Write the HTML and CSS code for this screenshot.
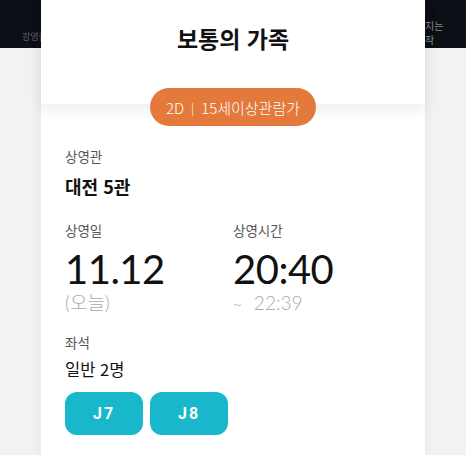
FILE: index.html
```html
<!DOCTYPE html>
<html lang="ko">
<head>
<meta charset="utf-8">
<link rel="stylesheet" href="styles.css">
</head>
<body>
<div class="topbar">
  <span class="bar-left">강영한</span>
  <span class="bar-right"><span class="bar-line">지는</span><span class="bar-line">작</span></span>
</div>
<div class="modal">
  <div class="modal-head">
    <h1 class="title">보통의 가족</h1>
  </div>
  <div class="modal-body">
    <div class="badge">2D <span class="sep">|</span> 15세이상관람가</div>
    <div class="field">
      <div class="label">상영관</div>
      <div class="hall">대전 5관</div>
    </div>
    <div class="cols">
      <div class="col">
        <div class="label">상영일</div>
        <div class="big">11.12</div>
        <div class="sub">(오늘)</div>
      </div>
      <div class="col">
        <div class="label">상영시간</div>
        <div class="big">20:40</div>
        <div class="sub"><span class="tilde">~</span> 22:39</div>
      </div>
    </div>
    <div class="field seats">
      <div class="label">좌석</div>
      <div class="people">일반 2명</div>
      <div class="seat-list">
        <span class="seat">J7</span>
        <span class="seat">J8</span>
      </div>
    </div>
  </div>
</div>
</body>
</html>
```
FILE: styles.css
```css
html, body {
  margin: 0;
  padding: 0;
}
body {
  width: 466px;
  height: 455px;
  overflow: hidden;
  background: #f2f2f2;
  font-family: "Noto Sans CJK KR", "Noto Sans", sans-serif;
  position: relative;
}
.topbar {
  height: 48px;
  background: #0c0f15;
  display: flex;
  justify-content: space-between;
  color: #666;
  font-size: 9px;
  line-height: 11px;
}
.bar-left {
  padding: 31px 0 0 22px;
}
.bar-right {
  width: 24px;
  margin-right: 17px;
  padding-top: 19px;
  display: flex;
  flex-direction: column;
  font-size: 10px;
  line-height: 14px;
  color: #888;
  white-space: nowrap;
}
.modal {
  position: absolute;
  left: 41px;
  top: 0;
  width: 384px;
  height: 470px;
  background: #fff;
  box-shadow: 0 0 12px rgba(0,0,0,0.06);
}
.modal-head {
  height: 104px;
  display: flex;
  justify-content: center;
  position: relative;
  z-index: 1;
  box-shadow: 0 6px 14px rgba(0,0,0,0.07);
}
.title {
  margin: 23px 0 0;
  font-size: 23px;
  font-weight: 700;
  line-height: 30px;
  color: #111;
}
.modal-body {
  position: relative;
  padding: 42px 24px 0 24px;
}
.badge {
  position: absolute;
  top: -16px;
  left: 109px;
  width: 166px;
  height: 38px;
  border-radius: 19px;
  background: #e3793a;
  color: #fff;
  font-size: 15px;
  font-weight: 300;
  display: flex;
  align-items: center;
  justify-content: center;
  z-index: 2;
}
.sep {
  margin: 0 7px;
  font-size: 12px;
}
.label {
  font-size: 13.5px;
  color: #555;
  line-height: 20px;
}
.hall {
  margin-top: 8px;
  font-size: 18px;
  font-weight: 700;
  color: #111;
  line-height: 24px;
}
.cols {
  display: flex;
  margin-top: 22px;
}
.col {
  width: 169px;
}
.big {
  font-family: Lato, sans-serif;
  font-size: 40px;
  font-weight: 400;
  line-height: 40px;
  color: #111;
  margin-top: 9px;
  letter-spacing: -0.5px;
}
.sub {
  font-family: Lato, "Noto Sans CJK KR", sans-serif;
  font-weight: 300;
  font-size: 19px;
  color: #aaa;
  line-height: 22px;
  margin-top: 3px;
}
.tilde {
  margin-right: 7px;
  font-size: 15px;
}
.seats {
  margin-top: 17px;
}
.people {
  margin-top: 6px;
  font-size: 16.5px;
  color: #111;
  line-height: 22px;
}
.seat-list {
  display: flex;
  gap: 7px;
  margin-top: 12px;
}
.seat {
  width: 78px;
  height: 43px;
  border-radius: 12px;
  background: #19b7cb;
  color: #fff;
  font-family: Roboto, sans-serif;
  font-weight: 700;
  font-size: 16px;
  letter-spacing: 2px;
  display: flex;
  align-items: center;
  justify-content: center;
}
```
